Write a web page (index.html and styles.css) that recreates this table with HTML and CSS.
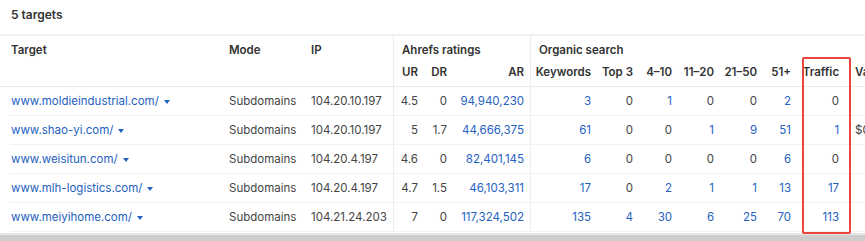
FILE: index.html
```html
<!DOCTYPE html>
<html lang="en">
<head>
    <meta charset="UTF-8">
    <title>Targets</title>
    <link rel="stylesheet" href="styles.css">
</head>
<body>
    <div class="panel">
        <div class="panel-title">5 targets</div>
        <div class="table-wrap">
            <table class="targets">
                <colgroup>
                    <col class="c-target">
                    <col class="c-mode">
                    <col class="c-ip">
                    <col class="c-ur">
                    <col class="c-dr">
                    <col class="c-ar">
                    <col class="c-kw">
                    <col class="c-top3">
                    <col class="c-410">
                    <col class="c-1120">
                    <col class="c-2150">
                    <col class="c-51">
                    <col class="c-traffic">
                    <col class="c-value">
                </colgroup>
                <thead>
                    <tr class="group-row">
                        <th rowspan="2" class="first">Target</th>
                        <th rowspan="2">Mode</th>
                        <th rowspan="2">IP</th>
                        <th colspan="3" class="group sep">Ahrefs ratings</th>
                        <th colspan="7" class="group sep">Organic search</th>
                        <th class="blank"></th>
                    </tr>
                    <tr class="sub-row">
                        <th class="num sep">UR</th>
                        <th class="num">DR</th>
                        <th class="num">AR</th>
                        <th class="num sep">Keywords</th>
                        <th class="num">Top 3</th>
                        <th class="num">4–10</th>
                        <th class="num">11–20</th>
                        <th class="num">21–50</th>
                        <th class="num">51+</th>
                        <th class="num">Traffic</th>
                        <th class="value">Value</th>
                    </tr>
                </thead>
                <tbody>
                    <tr>
                        <td class="first"><a href="#">www.moldieindustrial.com/</a><span class="caret"></span></td>
                        <td>Subdomains</td>
                        <td>104.20.10.197</td>
                        <td class="num sep">4.5</td>
                        <td class="num">0</td>
                        <td class="num link">94,940,230</td>
                        <td class="num sep link">3</td>
                        <td class="num">0</td>
                        <td class="num link">1</td>
                        <td class="num">0</td>
                        <td class="num">0</td>
                        <td class="num link">2</td>
                        <td class="num">0</td>
                        <td class="value"></td>
                    </tr>
                    <tr>
                        <td class="first"><a href="#">www.shao-yi.com/</a><span class="caret"></span></td>
                        <td>Subdomains</td>
                        <td>104.20.10.197</td>
                        <td class="num sep">5</td>
                        <td class="num">1.7</td>
                        <td class="num link">44,666,375</td>
                        <td class="num sep link">61</td>
                        <td class="num">0</td>
                        <td class="num">0</td>
                        <td class="num link">1</td>
                        <td class="num link">9</td>
                        <td class="num link">51</td>
                        <td class="num link">1</td>
                        <td class="value">$0</td>
                    </tr>
                    <tr>
                        <td class="first"><a href="#">www.weisitun.com/</a><span class="caret"></span></td>
                        <td>Subdomains</td>
                        <td>104.20.4.197</td>
                        <td class="num sep">4.6</td>
                        <td class="num">0</td>
                        <td class="num link">82,401,145</td>
                        <td class="num sep link">6</td>
                        <td class="num">0</td>
                        <td class="num">0</td>
                        <td class="num">0</td>
                        <td class="num">0</td>
                        <td class="num link">6</td>
                        <td class="num">0</td>
                        <td class="value"></td>
                    </tr>
                    <tr>
                        <td class="first"><a href="#">www.mlh-logistics.com/</a><span class="caret"></span></td>
                        <td>Subdomains</td>
                        <td>104.20.4.197</td>
                        <td class="num sep">4.7</td>
                        <td class="num">1.5</td>
                        <td class="num link">46,103,311</td>
                        <td class="num sep link">17</td>
                        <td class="num">0</td>
                        <td class="num link">2</td>
                        <td class="num link">1</td>
                        <td class="num link">1</td>
                        <td class="num link">13</td>
                        <td class="num link">17</td>
                        <td class="value"></td>
                    </tr>
                    <tr>
                        <td class="first"><a href="#">www.meiyihome.com/</a><span class="caret"></span></td>
                        <td>Subdomains</td>
                        <td>104.21.24.203</td>
                        <td class="num sep">7</td>
                        <td class="num">0</td>
                        <td class="num link">117,324,502</td>
                        <td class="num sep link">135</td>
                        <td class="num link">4</td>
                        <td class="num link">30</td>
                        <td class="num link">6</td>
                        <td class="num link">25</td>
                        <td class="num link">70</td>
                        <td class="num link">113</td>
                        <td class="value"></td>
                    </tr>
                </tbody>
            </table>
            <div class="highlight"></div>
        </div>
        <div class="scrollbar"></div>
    </div>
</body>
</html>
```

FILE: styles.css
```css
body {
    margin: 0;
    font-family: Inter, "Noto Sans", sans-serif;
    font-size: 11.5px;
    color: #3a3a3a;
    background-color: #fff;
}

.panel {
    width: 865px;
    height: 241px;
    overflow: hidden;
    display: flex;
    flex-direction: column;
}

.panel-title {
    height: 34px;
    line-height: 30px;
    padding-left: 11px;
    font-size: 12px;
    font-weight: 600;
    color: #333;
    border-bottom: 2px solid #efefef;
}

.table-wrap {
    position: relative;
    height: 197px;
}

.targets {
    table-layout: fixed;
    width: 900px;
    border-collapse: separate;
    border-spacing: 0;
}

.c-target { width: 219px; }
.c-mode { width: 82px; }
.c-ip { width: 92px; }
.c-ur { width: 31px; }
.c-dr { width: 29px; }
.c-ar { width: 77px; }
.c-kw { width: 67px; }
.c-top3 { width: 42px; }
.c-410 { width: 39px; }
.c-1120 { width: 42px; }
.c-2150 { width: 43px; }
.c-51 { width: 34px; }
.c-traffic { width: 48px; }
.c-value { width: 55px; }

.targets th,
.targets td {
    padding: 6px 6px 6px 10px;
    line-height: 16px;
    text-align: left;
    white-space: nowrap;
    vertical-align: top;
}

.targets th {
    font-weight: 600;
    color: #333;
}

.targets th.first,
.targets td.first {
    padding-left: 11px;
}

.group-row th.group {
    padding-left: 8px;
    padding-bottom: 0;
}

.group-row th.blank {
    padding-bottom: 0;
}

.sub-row th {
    border-bottom: 1px solid #ececec;
}

.group-row th[rowspan] {
    border-bottom: 1px solid #ececec;
}

.targets td {
    color: #444;
    border-bottom: 1px solid #f0f0f0;
}

.targets td.first {
    border-bottom: none;
    background: linear-gradient(#f0f0f0, #f0f0f0) no-repeat 10px 100% / calc(100% - 10px) 1px;
}

.targets .num {
    text-align: right;
    padding-left: 0;
}

.targets .sep {
    border-left: 1px solid #ececec;
}

.targets .link {
    color: #2561c1;
}

.targets .value {
    padding-left: 10px;
}

.targets a {
    color: #2561c1;
    text-decoration: none;
}

.caret {
    display: inline-block;
    margin-left: 5px;
    vertical-align: middle;
    border-left: 3.5px solid transparent;
    border-right: 3.5px solid transparent;
    border-top: 4px solid #2561c1;
}

.highlight {
    position: absolute;
    left: 802px;
    top: 21px;
    width: 45px;
    height: 173px;
    border: 2px solid #e8453d;
    border-radius: 2px;
}

.scrollbar {
    flex: 1;
    background-color: #cdcdcd;
    border-top: 2px solid #e4e4e4;
}
```
